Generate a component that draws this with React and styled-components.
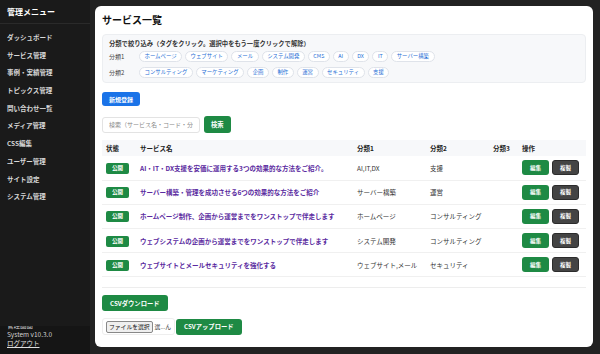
import React from "react";
import styled, { createGlobalStyle } from "styled-components";

const GlobalStyle = createGlobalStyle`
  html, body {
    margin: 0;
    padding: 0;
    background: #222222;
    font-family: "Noto Sans CJK JP", "Noto Sans", sans-serif;
  }
  * { box-sizing: border-box; }
`;

const menuItems = [
  "ダッシュボード",
  "サービス管理",
  "事例・実績管理",
  "トピックス管理",
  "問い合わせ一覧",
  "メディア管理",
  "CSS編集",
  "ユーザー管理",
  "サイト設定",
  "システム管理",
];

const tags1 = ["ホームページ", "ウェブサイト", "メール", "システム開発", "CMS", "AI", "DX", "IT", "サーバー構築"];
const tags2 = ["コンサルティング", "マーケティング", "企画", "制作", "運営", "セキュリティ", "支援"];

const services = [
  { name: "AI・IT・DX支援を安価に運用する3つの効果的な方法をご紹介。", cat1: "AI,IT,DX", cat2: "支援" },
  { name: "サーバー構築・管理を成功させる6つの効果的な方法をご紹介", cat1: "サーバー構築", cat2: "運営" },
  { name: "ホームページ制作、企画から運営までをワンストップで伴走します", cat1: "ホームページ", cat2: "コンサルティング" },
  { name: "ウェブシステムの企画から運営までをワンストップで伴走します", cat1: "システム開発", cat2: "コンサルティング" },
  { name: "ウェブサイトとメールセキュリティを強化する", cat1: "ウェブサイト,メール", cat2: "セキュリティ" },
];

const App = () => {
  return (
    <>
      <GlobalStyle />
      <Layout>
        <Sidebar>
          <SideTitle>管理メニュー</SideTitle>
          <Menu>
            {menuItems.map((item) => (
              <MenuItem key={item}>{item}</MenuItem>
            ))}
          </Menu>
          <SideFooter>
            <FooterLine>管理画面</FooterLine>
            <FooterLine>System v10.3.0</FooterLine>
            <Logout>ログアウト</Logout>
          </SideFooter>
        </Sidebar>
        <Main>
          <Panel>
            <Title>サービス一覧</Title>
            <FilterBox>
              <FilterNote>分類で絞り込み（タグをクリック。選択中をもう一度クリックで解除）</FilterNote>
              <FilterRow>
                <FilterLabel>分類1</FilterLabel>
                <Tags>
                  {tags1.map((t) => (
                    <Tag key={t}>{t}</Tag>
                  ))}
                </Tags>
              </FilterRow>
              <FilterRow>
                <FilterLabel>分類2</FilterLabel>
                <Tags>
                  {tags2.map((t) => (
                    <Tag key={t}>{t}</Tag>
                  ))}
                </Tags>
              </FilterRow>
            </FilterBox>
            <NewButton>新規登録</NewButton>
            <SearchRow>
              <SearchInput placeholder="検索（サービス名・コード・分類）" />
              <GreenButton $small>検索</GreenButton>
            </SearchRow>
            <Table>
              <thead>
                <tr>
                  <Th $w={34}>状態</Th>
                  <Th $w={217}>サービス名</Th>
                  <Th $w={73}>分類1</Th>
                  <Th $w={63}>分類2</Th>
                  <Th $w={29}>分類3</Th>
                  <Th>操作</Th>
                </tr>
              </thead>
              <tbody>
                {services.map((s) => (
                  <tr key={s.name}>
                    <Td>
                      <Badge>公開</Badge>
                    </Td>
                    <Td>
                      <ServiceLink>{s.name}</ServiceLink>
                    </Td>
                    <Td>{s.cat1}</Td>
                    <Td>{s.cat2}</Td>
                    <Td></Td>
                    <Td>
                      <Actions>
                        <ActionButton $variant="edit">編集</ActionButton>
                        <ActionButton $variant="copy">複製</ActionButton>
                      </Actions>
                    </Td>
                  </tr>
                ))}
              </tbody>
            </Table>
            <Divider />
            <GreenButton>CSVダウンロード</GreenButton>
            <UploadRow>
              <FileBox>
                <FileButton>ファイルを選択</FileButton>
                <FileName>選...ん</FileName>
              </FileBox>
              <GreenButton>CSVアップロード</GreenButton>
            </UploadRow>
          </Panel>
        </Main>
      </Layout>
    </>
  );
};

const Layout = styled.div`
  display: flex;
  width: 600px;
  height: 354px;
  overflow: hidden;
`;

const Sidebar = styled.aside`
  width: 90px;
  flex-shrink: 0;
  background: #1a1a1a;
  color: #e8e8e8;
  display: flex;
  flex-direction: column;
`;

const SideTitle = styled.div`
  font-size: 8px;
  font-weight: 700;
  color: #ffffff;
  height: 24px;
  line-height: 24px;
  padding: 0 7px;
  border-bottom: 1px solid #2a2a2a;
`;

const Menu = styled.nav`
  display: flex;
  flex-direction: column;
  padding-top: 5px;
  flex: 1;
`;

const MenuItem = styled.div`
  font-size: 6.5px;
  font-weight: 700;
  color: #d8d8d8;
  height: 17.7px;
  line-height: 17.7px;
  padding-left: 7px;
`;

const SideFooter = styled.div`
  height: 28px;
  background: #151515;
  display: flex;
  flex-direction: column;
  justify-content: flex-end;
  overflow: hidden;
  padding: 0 7px 6px;
`;

const FooterLine = styled.div`
  font-size: 6.5px;
  line-height: 9px;
  color: #d0d0d0;
  flex-shrink: 0;
`;

const Logout = styled.a`
  font-size: 6.5px;
  line-height: 9px;
  color: #e0e0e0;
  text-decoration: underline;
  flex-shrink: 0;
`;

const Main = styled.main`
  flex: 1;
  background: #222222;
  padding: 6px 7px 7px 5px;
`;

const Panel = styled.section`
  height: 100%;
  background: #ffffff;
  border-radius: 6px;
  padding: 6px 7px 0 7px;
  display: flex;
  flex-direction: column;
  align-items: flex-start;
`;

const Title = styled.h1`
  margin: 0 0 7px;
  font-size: 10px;
  font-weight: 700;
  color: #111;
  line-height: 15px;
`;

const FilterBox = styled.div`
  width: 100%;
  height: 49px;
  background: #f7f8fa;
  border: 1px solid #eceef1;
  border-radius: 4px;
  padding: 4px 6px 0;
  display: flex;
  flex-direction: column;
  gap: 4px;
`;

const FilterNote = styled.div`
  font-size: 6.3px;
  font-weight: 700;
  color: #333;
  line-height: 9px;
  margin-bottom: -2px;
`;

const FilterRow = styled.div`
  display: flex;
  align-items: center;
  height: 12px;
`;

const FilterLabel = styled.div`
  width: 30px;
  font-size: 6px;
  color: #444;
  flex-shrink: 0;
`;

const Tags = styled.div`
  display: flex;
  flex-wrap: wrap;
  gap: 3px;
`;

const Tag = styled.span`
  font-size: 5.4px;
  color: #1f6fd6;
  background: #ffffff;
  border: 1px solid #dfe3ea;
  border-radius: 6px;
  padding: 0 4.5px;
  height: 11px;
  line-height: 9px;
`;

const NewButton = styled.button`
  margin-top: 9px;
  background: #1a73e8;
  color: #ffffff;
  border: none;
  border-radius: 3px;
  font-family: inherit;
  font-size: 6px;
  font-weight: 700;
  height: 14px;
  padding: 0 7px;
`;

const SearchRow = styled.div`
  display: flex;
  align-items: center;
  gap: 4px;
  margin-top: 10px;
`;

const SearchInput = styled.input`
  width: 98px;
  height: 16px;
  border: 1px solid #e3e3e3;
  border-radius: 3px;
  font-family: inherit;
  font-size: 6px;
  padding: 0 6px;
  outline: none;
  &::placeholder {
    color: #888;
  }
`;

const GreenButton = styled.button`
  background: #1e8a44;
  color: #ffffff;
  border: none;
  border-radius: 3px;
  font-family: inherit;
  font-size: 6.3px;
  font-weight: 700;
  height: ${(p) => (p.$small ? "17px" : "16px")};
  padding: 0 ${(p) => (p.$small ? "7px" : "8px")};
  flex-shrink: 0;
`;

const Table = styled.table`
  width: 100%;
  margin-top: 7px;
  border-collapse: collapse;
  font-size: 6.5px;
  color: #333;
`;

const Th = styled.th`
  text-align: left;
  font-weight: 700;
  background: #f7f8fa;
  height: 16px;
  padding: 0 4px;
  width: ${(p) => (p.$w ? `${p.$w}px` : "auto")};
  color: #222;
`;

const Td = styled.td`
  height: 24.2px;
  padding: 0 4px;
  border-bottom: 1px solid #f0f0f0;
  white-space: nowrap;
`;

const Badge = styled.span`
  display: inline-block;
  background: #1e8a44;
  color: #ffffff;
  font-size: 5.5px;
  font-weight: 700;
  border-radius: 2px;
  padding: 0 6px;
  height: 11px;
  line-height: 11px;
`;

const ServiceLink = styled.a`
  color: #5a2aa0;
  font-weight: 700;
  font-size: 6.5px;
`;

const Actions = styled.div`
  display: flex;
  gap: 3px;
`;

const ActionButton = styled.button`
  border: ${(p) => (p.$variant === "copy" ? "1px solid #2c2c2c" : "none")};
  background: ${(p) => (p.$variant === "copy" ? "#444444" : "#1e8a44")};
  color: #ffffff;
  border-radius: 3px;
  font-family: inherit;
  font-size: 5.5px;
  font-weight: 700;
  height: 15px;
  width: 27px;
  padding: 0;
`;

const Divider = styled.hr`
  width: 100%;
  border: none;
  border-top: 1px solid #ededed;
  margin: 10px 0 7px;
`;

const UploadRow = styled.div`
  display: flex;
  align-items: center;
  gap: 1px;
  margin-top: 7px;
`;

const FileBox = styled.div`
  display: flex;
  align-items: center;
  gap: 2px;
  width: 73px;
  border: 1px solid #eee;
  border-radius: 3px;
  padding: 2px 3px;
  height: 17px;
  overflow: hidden;
`;

const FileButton = styled.span`
  font-size: 5.8px;
  border: 1px solid #888;
  background: #efefef;
  border-radius: 2px;
  padding: 0 2px;
  line-height: 10px;
  color: #111;
  white-space: nowrap;
`;

const FileName = styled.span`
  font-size: 5.8px;
  color: #333;
  white-space: nowrap;
`;

export default App;
